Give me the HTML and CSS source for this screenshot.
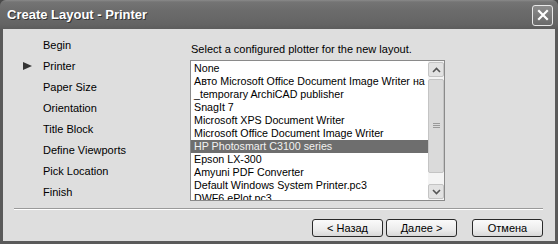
FILE: index.html
```html
<!DOCTYPE html>
<html>
<head>
<meta charset="utf-8">
<title>Create Layout - Printer</title>
<link rel="stylesheet" href="styles.css">
</head>
<body>
<div class="window">
  <div class="titlebar">
    <span class="title">Create Layout - Printer</span>
    <span class="close">
      <svg width="12" height="12" viewBox="0 0 12 12"><path d="M2 2 L10 10 M10 2 L2 10" stroke="#fff" stroke-width="2.2" stroke-linecap="square"/></svg>
    </span>
  </div>
  <div class="body">
    <div class="panes">
      <ul class="steps">
        <li>Begin</li>
        <li class="current">Printer</li>
        <li>Paper Size</li>
        <li>Orientation</li>
        <li>Title Block</li>
        <li>Define Viewports</li>
        <li>Pick Location</li>
        <li>Finish</li>
      </ul>
      <div class="page">
        <div class="prompt">Select a configured plotter for the new layout.</div>
        <div class="listbox">
          <ul class="items">
            <li>None</li>
            <li>Авто Microsoft Office Document Image Writer на</li>
            <li>_temporary ArchiCAD publisher</li>
            <li>SnagIt 7</li>
            <li>Microsoft XPS Document Writer</li>
            <li>Microsoft Office Document Image Writer</li>
            <li class="selected">HP Photosmart C3100 series</li>
            <li>Epson LX-300</li>
            <li>Amyuni PDF Converter</li>
            <li>Default Windows System Printer.pc3</li>
            <li>DWF6 ePlot.pc3</li>
          </ul>
          <div class="scrollbar">
            <div class="sbtn">
              <svg width="9" height="6" viewBox="0 0 9 6"><path d="M1 5 L4.5 1.5 L8 5" fill="none" stroke="#555" stroke-width="1.6"/></svg>
            </div>
            <div class="thumb">
              <svg width="7" height="6" viewBox="0 0 7 6"><path d="M0 0.5h7M0 2.5h7M0 4.5h7" stroke="#999" stroke-width="1"/></svg>
            </div>
            <div class="track"></div>
            <div class="sbtn">
              <svg width="9" height="6" viewBox="0 0 9 6"><path d="M1 1 L4.5 4.5 L8 1" fill="none" stroke="#555" stroke-width="1.6"/></svg>
            </div>
          </div>
        </div>
      </div>
    </div>
    <div class="separator"></div>
    <div class="buttons">
      <button type="button">&lt; Назад</button>
      <button type="button">Далее &gt;</button>
      <button type="button" class="cancel">Отмена</button>
    </div>
  </div>
</div>
</body>
</html>
```

FILE: styles.css
```css
body {
    margin: 0;
    background: #4a4a4a;
    font-family: "Liberation Sans", Arial, sans-serif;
    font-size: 11px;
    color: #000;
}
.window {
    width: 558px;
    height: 244px;
    box-sizing: border-box;
    background: #5a5a5a;
    border-radius: 6px 6px 0 0;
    padding: 0 3px 3px 3px;
    display: flex;
    flex-direction: column;
}
.titlebar {
    height: 29px;
    flex: none;
    display: flex;
    align-items: center;
    justify-content: space-between;
    background: linear-gradient(#8a8a8a 0px, #747474 2px, #6c6c6c 10px, #646464 24px, #5c5c5c 29px);
    margin: 0 -3px;
    padding-left: 7px;
    padding-right: 5px;
    border-radius: 6px 6px 0 0;
}
.title {
    color: #fff;
    font-weight: bold;
    font-size: 13px;
    text-shadow: 1px 1px 0 #333;
}
.close {
    width: 19px;
    height: 19px;
    border: 1px solid #e8e8e8;
    border-radius: 3px;
    background: linear-gradient(#8c8c8c, #6a6a6a);
    display: flex;
    align-items: center;
    justify-content: center;
    margin-top: 1px;
}
.body {
    flex: 1;
    background: #dedede;
    display: flex;
    flex-direction: column;
}
.panes {
    display: flex;
    height: 171px;
}
.steps {
    list-style: none;
    margin: 0;
    padding: 6px 0 0 40px;
    width: 147px;
}
.steps li {
    height: 21px;
    line-height: 21px;
    position: relative;
}
.steps li.current::before {
    content: "";
    position: absolute;
    left: -20px;
    top: 6px;
    border-left: 9px solid #333;
    border-top: 4px solid transparent;
    border-bottom: 4px solid transparent;
}
.page {
    padding-top: 14px;
}
.prompt {
    height: 13px;
    line-height: 13px;
    padding-left: 1px;
    margin-bottom: 4px;
}
.listbox {
    width: 255px;
    height: 141px;
    box-sizing: border-box;
    border: 1px solid #8a8a8a;
    background: #fff;
    display: flex;
    overflow: hidden;
}
.items {
    list-style: none;
    margin: 0;
    padding: 1px 0 0 0;
    flex: 1;
    overflow: hidden;
    font-size: 10.7px;
}
.items li {
    height: 13px;
    line-height: 13px;
    padding-left: 3px;
    white-space: nowrap;
    overflow: hidden;
}
.items li.selected {
    background: #6e6e6e;
    color: #f2f2f2;
}
.scrollbar {
    width: 16px;
    flex: none;
    background: #f4f4f4;
    display: flex;
    flex-direction: column;
    padding: 1px 0;
}
.sbtn {
    height: 15px;
    box-sizing: border-box;
    border: 1px solid #c4c4c4;
    border-radius: 2px;
    background: #e2e2e2;
    display: flex;
    align-items: center;
    justify-content: center;
}
.thumb {
    height: 94px;
    margin-top: 2px;
    box-sizing: border-box;
    border: 1px solid #c4c4c4;
    border-radius: 2px;
    background: #dadada;
    display: flex;
    align-items: center;
    justify-content: center;
}
.track {
    flex: 1;
}
.separator {
    margin: 8px 12px 0 11px;
    border-top: 1px solid #9a9a9a;
    border-bottom: 1px solid #fff;
}
.buttons {
    display: flex;
    justify-content: flex-end;
    padding: 9px 12px 0 0;
}
.buttons button {
    width: 71px;
    height: 18px;
    margin-left: 3px;
    padding: 0;
    font-family: inherit;
    font-size: 11px;
    color: #000;
    background: linear-gradient(#fafafa, #ececec 60%, #d8d8d8);
    border: 1px solid #2a2a2a;
    border-radius: 3px;
}
.buttons button.cancel {
    margin-left: 15px;
}
```
